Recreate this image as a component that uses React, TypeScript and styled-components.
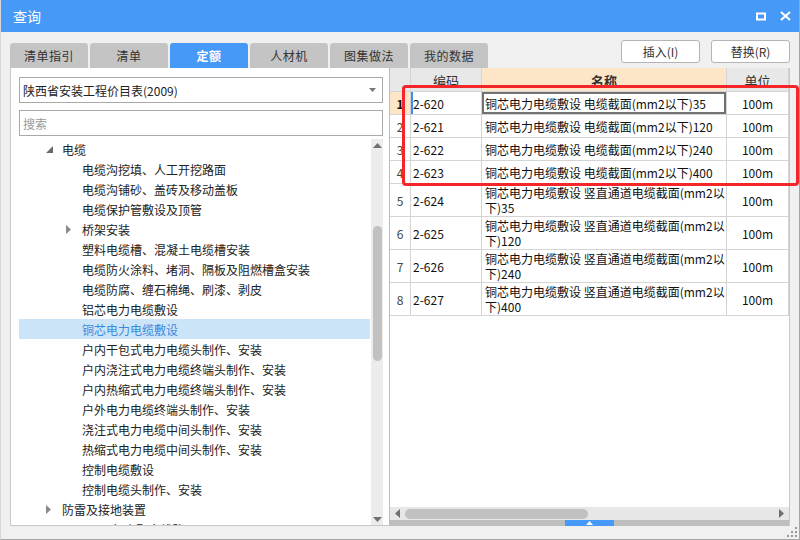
import styled, { createGlobalStyle } from "styled-components";

const GlobalStyle = createGlobalStyle`
	html, body {
		margin: 0;
		padding: 0;
		background: #ffffff;
	}
	body {
		font-family: "Noto Sans CJK SC", "Noto Sans", sans-serif;
		color: #222;
	}
	* {
		box-sizing: border-box;
	}
`;

const Window = styled.div`
	position: relative;
	width: 800px;
	height: 540px;
	background: #f0f0f0;
	border-left: 1px solid #d8d8d8;
	border-right: 1px solid #a6a6a6;
	border-bottom: 1px solid #a6a6a6;
	display: flex;
	flex-direction: column;
	overflow: hidden;
`;

const TitleBar = styled.div`
	height: 32px;
	flex: none;
	background: #4699f6;
	color: #fff;
	font-size: 14px;
	display: flex;
	align-items: center;
	justify-content: space-between;
	padding: 0 8px 0 12px;
`;

const TitleButtons = styled.div`
	display: flex;
	align-items: center;
	gap: 14px;
`;

const TopRow = styled.div`
	height: 36px;
	flex: none;
	display: flex;
	padding: 0 9px;
`;

const Tabs = styled.div`
	display: flex;
	gap: 2px;
	align-self: flex-end;
`;

const Tab = styled.div<{ $active?: boolean }>`
	width: 78px;
	height: 25px;
	border-radius: 3px 3px 0 0;
	background: ${(p) => (p.$active ? "#4699f6" : "#c4c4c4")};
	color: ${(p) => (p.$active ? "#fff" : "#333")};
	font-size: 12px;
	font-weight: ${(p) => (p.$active ? 600 : 400)};
	display: flex;
	align-items: center;
	justify-content: center;
	letter-spacing: 0.5px;
`;

const Actions = styled.div`
	margin-left: auto;
	margin-top: 8px;
	display: flex;
	gap: 11px;
	align-self: flex-start;
`;

const Button = styled.div`
	width: 79px;
	height: 23px;
	background: #fff;
	border: 1px solid #b4b4b4;
	border-radius: 3px;
	font-size: 12px;
	color: #333;
	display: flex;
	align-items: center;
	justify-content: center;
`;

const Body = styled.div`
	height: 458px;
	flex: none;
	display: flex;
	margin: 0 9px;
`;

const LeftPanel = styled.div`
	width: 379px;
	background: #fff;
	border-left: 1px solid #c8c8c8;
	border-bottom: 1px solid #c8c8c8;
	padding: 9px 5px 0 8px;
	display: flex;
	flex-direction: column;
`;

const Select = styled.div`
	height: 26px;
	width: 364px;
	border: 1px solid #a9a9a9;
	font-size: 12px;
	color: #222;
	display: flex;
	align-items: center;
	justify-content: space-between;
	padding: 0 6px 0 3px;
`;

const SearchBox = styled.div`
	height: 26px;
	width: 364px;
	margin-top: 7px;
	border: 1px solid #a9a9a9;
	font-size: 12px;
	color: #9a9a9a;
	display: flex;
	align-items: center;
	padding-left: 3px;
`;

const TreeWrap = styled.div`
	flex: 1;
	margin-top: 3px;
	display: flex;
	overflow: hidden;
	min-height: 0;
`;

const TreeList = styled.div`
	flex: 1;
	overflow: hidden;
`;

const TreeRow = styled.div<{ $level: number; $selected?: boolean }>`
	height: 20px;
	display: flex;
	align-items: center;
	padding-left: ${(p) => (p.$level === 1 ? 24 : 44)}px;
	font-size: 12px;
	white-space: nowrap;
	background: ${(p) => (p.$selected ? "#cce4f7" : "transparent")};
	color: ${(p) => (p.$selected ? "#3a89dc" : "#222")};
	margin-right: 1px;
`;

const Twisty = styled.span`
	width: 19px;
	flex: none;
	display: flex;
	align-items: center;
	padding-left: 3px;
`;

const VScroll = styled.div`
	width: 12px;
	flex: none;
	margin-right: 1px;
	background: #ececec;
	display: flex;
	flex-direction: column;
	align-items: center;
	padding: 4px 0 3px;
`;

const VThumb = styled.div`
	width: 9px;
	height: 135px;
	margin-top: 78px;
	border-radius: 5px;
	background: #c1c1c1;
`;

const RightPanel = styled.div`
	flex: 1;
	background: #fff;
	border-left: 1px solid #bcbcbc;
	border-right: 1px solid #c8c8c8;
	display: flex;
	flex-direction: column;
`;

const GridRow = styled.div<{ $h: number }>`
	display: grid;
	grid-template-columns: 21px 71px 245px 62px;
	height: ${(p) => p.$h}px;
	flex: none;
`;

const Cell = styled.div<{ $align?: string; $bg?: string }>`
	border-right: 1px solid #d4d4d4;
	border-bottom: 1px solid #d4d4d4;
	background: ${(p) => p.$bg || "#fff"};
	display: flex;
	align-items: center;
	justify-content: ${(p) => p.$align || "flex-start"};
	font-size: 12px;
	line-height: 15px;
	color: #111;
	padding: 0 3px;
	overflow: hidden;
	white-space: pre;
`;

const HeadCell = styled(Cell)<{ $bold?: boolean }>`
	font-size: 13px;
	color: #333;
	font-weight: ${(p) => (p.$bold ? 700 : 400)};
	padding-top: 2px;
`;

const NumCell = styled(Cell)<{ $current?: boolean }>`
	justify-content: center;
	color: ${(p) => (p.$current ? "#111" : "#444")};
	font-weight: ${(p) => (p.$current ? 700 : 400)};
	padding: 0;
`;

const CodeCell = styled(Cell)<{ $current?: boolean }>`
	padding-left: 2px;
	box-shadow: ${(p) => (p.$current ? "inset 2px 0 0 #3d8ee8" : "none")};
`;

const NameCell = styled(Cell)<{ $current?: boolean }>`
	box-shadow: ${(p) => (p.$current ? "inset 0 0 0 2px #727272" : "none")};
`;

const Filler = styled.div`
	flex: 1;
	background: #fff;
`;

const HScroll = styled.div`
	height: 13px;
	flex: none;
	background: #e7e7e7;
	display: flex;
	align-items: center;
	padding: 0 5px 0 5px;
`;

const HThumb = styled.div`
	width: 183px;
	height: 10px;
	margin-left: 5px;
	border-radius: 5px;
	background: #c1c1c1;
`;

const SplitBar = styled.div`
	height: 6px;
	flex: none;
	background: #bebebe;
	display: flex;
	justify-content: center;
`;

const SplitHandle = styled.div`
	width: 49px;
	height: 6px;
	background: #4699f6;
	display: flex;
	align-items: center;
	justify-content: center;
`;

const Highlight = styled.div`
	position: absolute;
	left: 401px;
	top: 85px;
	width: 397px;
	height: 101px;
	border: 3px solid #f5262a;
	border-radius: 4px;
	pointer-events: none;
`;

const Grip = styled.svg`
	position: absolute;
	right: 2px;
	bottom: 2px;
`;

const tree = [
	{ level: 1, text: "电缆", arrow: "open" },
	{ level: 2, text: "电缆沟挖填、人工开挖路面" },
	{ level: 2, text: "电缆沟铺砂、盖砖及移动盖板" },
	{ level: 2, text: "电缆保护管敷设及顶管" },
	{ level: 2, text: "桥架安装", arrow: "closed" },
	{ level: 2, text: "塑料电缆槽、混凝土电缆槽安装" },
	{ level: 2, text: "电缆防火涂料、堵洞、隔板及阻燃槽盒安装" },
	{ level: 2, text: "电缆防腐、缠石棉绳、刷漆、剥皮" },
	{ level: 2, text: "铝芯电力电缆敷设" },
	{ level: 2, text: "铜芯电力电缆敷设", selected: true },
	{ level: 2, text: "户内干包式电力电缆头制作、安装" },
	{ level: 2, text: "户内浇注式电力电缆终端头制作、安装" },
	{ level: 2, text: "户内热缩式电力电缆终端头制作、安装" },
	{ level: 2, text: "户外电力电缆终端头制作、安装" },
	{ level: 2, text: "浇注式电力电缆中间头制作、安装" },
	{ level: 2, text: "热缩式电力电缆中间头制作、安装" },
	{ level: 2, text: "控制电缆敷设" },
	{ level: 2, text: "控制电缆头制作、安装" },
	{ level: 1, text: "防雷及接地装置", arrow: "closed" },
	{ level: 1, text: "10kv以下架空配电线路", arrow: "closed" },
];

// 两行的名称用换行符分开
const rows = [
	{ code: "2-620", name: "铜芯电力电缆敷设 电缆截面(mm2以下)35" },
	{ code: "2-621", name: "铜芯电力电缆敷设 电缆截面(mm2以下)120" },
	{ code: "2-622", name: "铜芯电力电缆敷设 电缆截面(mm2以下)240" },
	{ code: "2-623", name: "铜芯电力电缆敷设 电缆截面(mm2以下)400" },
	{ code: "2-624", name: "铜芯电力电缆敷设 竖直通道电缆截面(mm2以\n下)35" },
	{ code: "2-625", name: "铜芯电力电缆敷设 竖直通道电缆截面(mm2以\n下)120" },
	{ code: "2-626", name: "铜芯电力电缆敷设 竖直通道电缆截面(mm2以\n下)240" },
	{ code: "2-627", name: "铜芯电力电缆敷设 竖直通道电缆截面(mm2以\n下)400" },
];

const tabs = ["清单指引", "清单", "定额", "人材机", "图集做法", "我的数据"];

function Arrow({ kind }: { kind?: string }) {
	if (kind === "open") {
		return (
			<svg width="7" height="7" viewBox="0 0 7 7">
				<polygon points="7,0 7,7 0,7" fill="#6a6a6a" />
			</svg>
		);
	}
	if (kind === "closed") {
		return (
			<svg width="5" height="9" viewBox="0 0 5 9">
				<polygon points="0,0 5,4.5 0,9" fill="#8a8a8a" />
			</svg>
		);
	}
	return null;
}

function App() {
	return (
		<Window>
			<GlobalStyle />
			<TitleBar>
				<span>查询</span>
				<TitleButtons>
					<svg width="10" height="9" viewBox="0 0 10 9">
						<rect x="1" y="1.5" width="8" height="6" fill="none" stroke="#fff" strokeWidth="2" />
					</svg>
					<svg width="11" height="10" viewBox="0 0 11 10">
						<path d="M1 1 L10 9 M10 1 L1 9" stroke="#fff" strokeWidth="2.2" />
					</svg>
				</TitleButtons>
			</TitleBar>

			<TopRow>
				<Tabs>
					{tabs.map((t) => (
						<Tab key={t} $active={t === "定额"}>
							{t}
						</Tab>
					))}
				</Tabs>
				<Actions>
					<Button>插入(I)</Button>
					<Button>替换(R)</Button>
				</Actions>
			</TopRow>

			<Body>
				<LeftPanel>
					<Select>
						<span>陕西省安装工程价目表(2009)</span>
						<svg width="7" height="4" viewBox="0 0 7 4">
							<polygon points="0,0 7,0 3.5,4" fill="#777" />
						</svg>
					</Select>
					<SearchBox>搜索</SearchBox>
					<TreeWrap>
						<TreeList>
							{tree.map((n) => (
								<TreeRow key={n.text} $level={n.level} $selected={n.selected}>
									<Twisty>
										<Arrow kind={n.arrow} />
									</Twisty>
									{n.text}
								</TreeRow>
							))}
						</TreeList>
						<VScroll>
							<svg width="9" height="5" viewBox="0 0 9 5">
								<polygon points="0,5 9,5 4.5,0" fill="#707070" />
							</svg>
							<VThumb />
							<div style={{ flex: 1 }} />
							<svg width="9" height="5" viewBox="0 0 9 5">
								<polygon points="0,0 9,0 4.5,5" fill="#707070" />
							</svg>
						</VScroll>
					</TreeWrap>
				</LeftPanel>

				<RightPanel>
					<GridRow $h={24}>
						<HeadCell $bg="#e8e8e8" />
						<HeadCell $bg="#e8e8e8" $align="center">
							编码
						</HeadCell>
						<HeadCell $bg="#fde6c8" $align="center" $bold>
							名称
						</HeadCell>
						<HeadCell $bg="#e8e8e8" $align="center">
							单位
						</HeadCell>
					</GridRow>
					{rows.map((r, i) => (
						<GridRow key={r.code} $h={r.name.includes("\n") ? 33 : 23}>
							<NumCell $current={i === 0} $bg={i === 0 ? "#fde6c8" : "#fff"}>
								{i + 1}
							</NumCell>
							<CodeCell $current={i === 0}>{r.code}</CodeCell>
							<NameCell $current={i === 0}>{r.name}</NameCell>
							<Cell $align="center">100m</Cell>
						</GridRow>
					))}
					<Filler />
					<HScroll>
						<svg width="5" height="9" viewBox="0 0 5 9">
							<polygon points="5,0 0,4.5 5,9" fill="#707070" />
						</svg>
						<HThumb />
						<div style={{ flex: 1 }} />
						<svg width="5" height="9" viewBox="0 0 5 9">
							<polygon points="0,0 5,4.5 0,9" fill="#707070" />
						</svg>
					</HScroll>
					<SplitBar>
						<SplitHandle>
							<svg width="7" height="4" viewBox="0 0 7 4">
								<polygon points="0,4 7,4 3.5,0" fill="#fff" />
							</svg>
						</SplitHandle>
					</SplitBar>
				</RightPanel>
			</Body>

			<Highlight />
			<Grip width="10" height="10" viewBox="0 0 10 10">
				<rect x="8" y="0" width="2" height="2" fill="#9a9a9a" />
				<rect x="4" y="4" width="2" height="2" fill="#9a9a9a" />
				<rect x="8" y="4" width="2" height="2" fill="#9a9a9a" />
				<rect x="0" y="8" width="2" height="2" fill="#9a9a9a" />
				<rect x="4" y="8" width="2" height="2" fill="#9a9a9a" />
				<rect x="8" y="8" width="2" height="2" fill="#9a9a9a" />
			</Grip>
		</Window>
	);
}

export default App;
